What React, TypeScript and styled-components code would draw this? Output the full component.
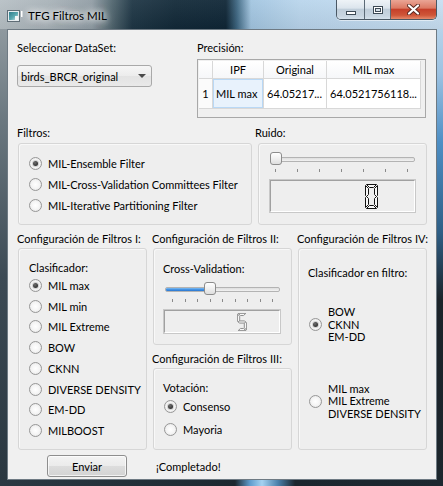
import React from "react";
import styled, { createGlobalStyle } from "styled-components";

const GlobalStyle = createGlobalStyle`
  html, body { margin: 0; padding: 0; }
  body {
    width: 443px; height: 486px; overflow: hidden;
    font-family: Lato, "Liberation Sans", Arial, sans-serif;
    font-size: 11px; color: #000;
  }
  *, *::before, *::after { box-sizing: border-box; }
`;

const Window = styled.div`
  width: 443px;
  height: 486px;
  display: flex;
  flex-direction: column;
  background: #1d2a33;
`;

const TitleBar = styled.div`
  height: 29px;
  flex: none;
  display: flex;
  align-items: flex-start;
  background:
    linear-gradient(to bottom, rgba(255,255,255,0.06), rgba(0,0,0,0.06)),
    linear-gradient(to right, #b7c0c5 0px, #a8b2b8 50px, #919da5 92px, #51666f 112px, #1e3645 132px, #122938 175px, #0f2636 226px, #3e6782 237px, #a2c5e0 251px, #b9d5ec 300px, #c8dff2 443px);
`;

const AppIconBox = styled.div`
  margin: 10px 0 0 7px;
  width: 16px;
  height: 12px;
  display: flex;
`;

const TitleText = styled.div`
  margin: 9px 0 0 5px;
  font-size: 11.5px;
  line-height: 14px;
  color: #000;
  text-shadow: 0 0 6px #fff, 0 0 8px rgba(255,255,255,0.9), 0 0 12px rgba(255,255,255,0.7);
  white-space: nowrap;
`;

const CaptionButtons = styled.div`
  margin-left: auto;
  margin-right: 6px;
  display: flex;
  height: 20px;
  border: 1px solid #4a5864;
  border-top: none;
  border-radius: 0 0 5px 5px;
  overflow: hidden;
  box-shadow: 0 1px 0 rgba(255,255,255,0.5);
`;

const CapBtn = styled.div<{ $w: number; $close?: boolean }>`
  width: ${(p) => p.$w}px;
  display: flex;
  align-items: center;
  justify-content: center;
  background: ${(p) =>
    p.$close
      ? "linear-gradient(#eaa595 0%, #dc7a64 42%, #c6402a 50%, #cf5638 80%, #e58a6c 100%)"
      : "linear-gradient(#eef3f7 0%, #dce5ed 42%, #c0ceda 50%, #c9d6e1 85%, #d6e2ec 100%)"};
  & + & { border-left: 1px solid #5b6a76; }
`;

const MinGlyph = styled.span`
  width: 10px;
  height: 4px;
  margin-top: 6px;
  background: #fff;
  border: 1px solid #3d4a55;
`;

const MaxGlyph = styled.span`
  width: 10px;
  height: 8px;
  border: 1px solid #3d4a55;
  box-shadow: inset 0 0 0 1px #fff, inset 0 0 0 2px #3d4a55;
  background: #d6e0e8;
`;

const Body = styled.div`
  flex: 1;
  display: flex;
`;

const LeftEdge = styled.div`
  width: 7px;
  background: linear-gradient(#8f999f 0%, #6b7880 20%, #3c4a54 55%, #2a3740 100%);
`;

const RightEdge = styled.div`
  width: 6px;
  background: linear-gradient(#b6d3ea 0%, #9cc2e2 10%, #4e8fc5 25%, #2f5f86 45%, #1b2329 60%, #1c262d 100%);
`;

const BottomEdge = styled.div`
  height: 6px;
  flex: none;
  background: linear-gradient(to right, #2b3943 0px, #1c2830 235px, #5f9ccd 250px, #a4d2f1 262px, #4a80ab 278px, #1b262e 295px, #1d2830 100%);
`;

const Client = styled.div`
  width: 430px;
  border: 1px solid #6e7a83;
  background: #f0f0f0;
  padding: 10px 8px 0 10px;
  display: flex;
  flex-direction: column;
`;

const Caption = styled.div<{ $dx?: number }>`
  height: 15px;
  line-height: 15px;
  white-space: nowrap;
  margin-left: ${(p) => (p.$dx ?? -1)}px;
`;

const Section = styled.div<{ $gap: number }>`
  display: flex;
  flex-direction: column;
  gap: ${(p) => p.$gap}px;
`;

const GroupBox = styled.div<{ $h: number; $pt: number; $pl: number }>`
  height: ${(p) => p.$h}px;
  border: 1px solid #d6d6d6;
  border-radius: 3px;
  background: #eeeeee;
  box-shadow: inset 1px 1px 0 #f8f8f8;
  padding: ${(p) => p.$pt}px 0 0 ${(p) => p.$pl}px;
  display: flex;
  flex-direction: column;
`;

const TopRow = styled.div`
  display: grid;
  grid-template-columns: 179px 230px;
  height: 78px;
`;

const Combo = styled.div`
  margin-top: 10px;
  margin-left: -1px;
  width: 135px;
  height: 22px;
  border: 1px solid #a9a9a9;
  border-radius: 3px;
  background: linear-gradient(#f6f6f6, #ececec 50%, #e3e3e3 51%, #e9e9e9);
  display: flex;
  align-items: center;
  justify-content: space-between;
  padding: 0 5px 0 3px;
`;

const ComboArrow = styled.span`
  width: 0;
  height: 0;
  border-left: 4px solid transparent;
  border-right: 4px solid transparent;
  border-top: 4px solid #4a4a4a;
`;

const Table = styled.div`
  margin-top: 4px;
  width: 229px;
  height: 59px;
  border: 1px solid #a8a8a8;
  padding: 1px;
  background: #f0f0f0;
`;

const TableGrid = styled.div`
  display: grid;
  grid-template-columns: 14px 51px 63px 94px;
  grid-template-rows: 18px 30px;
  width: 222px;
`;

const HeadCell = styled.div`
  background: linear-gradient(#ffffff, #f6f7f9);
  border-right: 1px solid #d8d8d8;
  border-bottom: 1px solid #d8d8d8;
  display: flex;
  align-items: center;
  justify-content: center;
  white-space: nowrap;
`;

const RowHead = styled(HeadCell)`
  background: #fbfbfb;
`;

const Cell = styled.div<{ $sel?: boolean }>`
  background: ${(p) => (p.$sel ? "#e8f2fc" : "#ffffff")};
  box-shadow: ${(p) => (p.$sel ? "inset 0 0 0 1px #b9d8f5" : "none")};
  border-right: 1px solid #d8d8d8;
  border-bottom: 1px solid #d8d8d8;
  display: flex;
  align-items: center;
  padding-left: 3px;
  white-space: nowrap;
  overflow: hidden;
`;

const Row2 = styled.div`
  margin-top: 7px;
  display: grid;
  grid-template-columns: 234px 169px;
  column-gap: 6px;
`;

const Row3 = styled.div`
  margin-top: 6px;
  display: grid;
  grid-template-columns: 129px 139px 129px;
  column-gap: 6px;
`;

const Column = styled.div`
  display: flex;
  flex-direction: column;
`;

const RadioRow = styled.div<{ $h: number }>`
  height: ${(p) => p.$h}px;
  display: flex;
  align-items: center;
  gap: 6px;
  white-space: nowrap;
`;

const RadioMark = styled.span<{ $on?: boolean }>`
  flex: none;
  width: 13px;
  height: 13px;
  border-radius: 50%;
  border: 1px solid #979797;
  background: radial-gradient(circle at 50% 50%, #ffffff 0%, #f5f5f5 50%, #dedede 100%);
  display: flex;
  align-items: center;
  justify-content: center;
  &::after {
    content: "";
    display: ${(p) => (p.$on ? "block" : "none")};
    width: 5px;
    height: 5px;
    border-radius: 50%;
    background: radial-gradient(circle at 40% 35%, #6e6e6e, #1a1a1a);
    box-shadow: 0 0 0 1px rgba(140,140,140,0.35);
  }
`;

const MultiRadio = styled.div<{ $mt: number }>`
  margin-top: ${(p) => p.$mt}px;
  display: flex;
  align-items: center;
  gap: 6px;
`;

const Lines = styled.div`
  line-height: 12.5px;
  white-space: nowrap;
`;

const SliderBox = styled.div<{ $w: number; $mt?: number }>`
  width: ${(p) => p.$w}px;
  margin-top: ${(p) => p.$mt ?? 0}px;
  display: flex;
  flex-direction: column;
  flex: none;
`;

const Track = styled.div`
  position: relative;
  height: 13px;
  padding-top: 5px;
`;

const Groove = styled.div`
  position: relative;
  height: 5px;
  border: 1px solid #b3b3b3;
  border-radius: 2px;
  background: linear-gradient(#dedede, #f2f2f2);
  overflow: hidden;
`;

const GrooveFill = styled.div`
  height: 100%;
  background: linear-gradient(#7fbdf2, #3a8ae0 60%, #2d78cf);
`;

const Handle = styled.div`
  position: absolute;
  top: 0;
  width: 12px;
  height: 13px;
  border: 1px solid #8c8c8c;
  border-radius: 3px;
  background: linear-gradient(#ffffff, #f0f0f0 50%, #dedede);
`;

const Ticks = styled.div<{ $pl: number; $pr: number }>`
  margin-top: 4px;
  height: 3px;
  display: flex;
  justify-content: space-between;
  padding: 0 ${(p) => p.$pr}px 0 ${(p) => p.$pl}px;
`;

const Tick = styled.span`
  width: 1px;
  height: 3px;
  background: #8a8a8a;
`;

const Lcd = styled.div<{ $w: number; $h: number; $pr: number; $dx?: number }>`
  margin-top: 8px;
  margin-left: ${(p) => p.$dx ?? 0}px;
  width: ${(p) => p.$w}px;
  height: ${(p) => p.$h}px;
  border: 1px solid;
  border-color: #a0a0a0 #ffffff #ffffff #a0a0a0;
  box-shadow: 0 0 0 1px #c8c8c8;
  display: flex;
  align-items: center;
  justify-content: flex-end;
  padding-right: ${(p) => p.$pr}px;
  flex: none;
`;

const BottomRow = styled.div`
  margin-top: 5px;
  display: flex;
  align-items: center;
  height: 22px;
`;

const Button = styled.button`
  margin-left: 29px;
  width: 80px;
  height: 22px;
  border: 1px solid #8e8e8e;
  border-radius: 3px;
  background: linear-gradient(#f3f3f3, #ebebeb 50%, #dddddd 51%, #d3d3d3);
  box-shadow: inset 0 0 0 1px rgba(255,255,255,0.7);
  font: inherit;
  color: #000;
  padding: 0;
`;

const Status = styled.div`
  margin-left: 29px;
  white-space: nowrap;
`;

const SEGS: Record<string, string> = {
  a: "1,0 11,0 8,3 4,3",
  b: "12,1 12,11 11,12 9,10 9,4",
  c: "12,13 12,23 9,20 9,14 11,12",
  d: "1,24 11,24 8,21 4,21",
  e: "0,13 1,12 3,14 3,20 0,23",
  f: "0,1 3,4 3,10 1,12 0,11",
  g: "1,12 3,10.5 9,10.5 11,12 9,13.5 3,13.5",
};
const DIGITS: Record<string, string> = { "0": "abcdef", "5": "afgcd" };

const SevenSeg = ({ d, w, h, color }: { d: string; w: number; h: number; color: string }) => (
  <svg width={w} height={h} viewBox="-0.5 -0.5 13 25" preserveAspectRatio="none">
    {DIGITS[d].split("").map((s) => (
      <polygon
        key={s}
        points={SEGS[s]}
        fill="#f7f7f7"
        stroke={color}
        strokeWidth={1}
        vectorEffect="non-scaling-stroke"
      />
    ))}
  </svg>
);

const Slider = ({
  w, pos, ticks, pl, pr, fill, mt,
}: { w: number; pos: number; ticks: number; pl: number; pr: number; fill?: number; mt?: number }) => (
  <SliderBox $w={w} $mt={mt}>
    <Track>
      <Groove>{fill ? <GrooveFill style={{ width: fill }} /> : null}</Groove>
      <Handle style={{ left: pos }} />
    </Track>
    <Ticks $pl={pl} $pr={pr}>
      {Array.from({ length: ticks }).map((_, i) => (
        <Tick key={i} />
      ))}
    </Ticks>
  </SliderBox>
);

const Radio = ({ label, on, h }: { label: string; on?: boolean; h: number }) => (
  <RadioRow $h={h}>
    <RadioMark $on={on} />
    <span>{label}</span>
  </RadioRow>
);

const AppIcon = () => (
  <AppIconBox>
    <svg width="16" height="12" viewBox="0 0 16 12">
      <defs>
        <linearGradient id="ig" x1="0" y1="0" x2="1" y2="1">
          <stop offset="0" stopColor="#2f7d8c" />
          <stop offset="0.55" stopColor="#5aa8b0" />
          <stop offset="1" stopColor="#d9e4e8" />
        </linearGradient>
      </defs>
      <rect x="0.5" y="0.5" width="12" height="11" fill="#e6ecef" stroke="#5f6d76" />
      <rect x="2" y="2" width="9" height="8" fill="url(#ig)" />
      <rect x="8" y="6" width="3" height="4" fill="#f4f6f7" />
      <rect x="14" y="1" width="1.5" height="6" fill="#ffffff" />
    </svg>
  </AppIconBox>
);

const CloseGlyph = () => (
  <svg width="13" height="11" viewBox="0 0 13 11">
    <path d="M2 1.5 L11 9.5 M11 1.5 L2 9.5" stroke="#5a2a22" strokeWidth="4" strokeLinecap="round" />
    <path d="M2 1.5 L11 9.5 M11 1.5 L2 9.5" stroke="#ffffff" strokeWidth="2.2" strokeLinecap="round" />
  </svg>
);

const classifiers = ["MIL max", "MIL min", "MIL Extreme", "BOW", "CKNN", "DIVERSE DENSITY", "EM-DD", "MILBOOST"];

export default function App() {
  return (
    <>
      <GlobalStyle />
      <Window>
        <TitleBar>
          <AppIcon />
          <TitleText>TFG Filtros MIL</TitleText>
          <CaptionButtons>
            <CapBtn $w={27}>
              <MinGlyph />
            </CapBtn>
            <CapBtn $w={26}>
              <MaxGlyph />
            </CapBtn>
            <CapBtn $w={46} $close>
              <CloseGlyph />
            </CapBtn>
          </CaptionButtons>
        </TitleBar>
        <Body>
          <LeftEdge />
          <Client>
            <TopRow>
              <Column>
                <Caption>Seleccionar DataSet:</Caption>
                <Combo>
                  <span>birds_BRCR_original</span>
                  <ComboArrow />
                </Combo>
              </Column>
              <Column>
                <Caption $dx={0}>Precisión:</Caption>
                <Table>
                  <TableGrid>
                    <HeadCell />
                    <HeadCell>IPF</HeadCell>
                    <HeadCell>Original</HeadCell>
                    <HeadCell>MIL max</HeadCell>
                    <RowHead>1</RowHead>
                    <Cell $sel>MIL max</Cell>
                    <Cell>64.05217...</Cell>
                    <Cell>64.0521756118...</Cell>
                  </TableGrid>
                </Table>
              </Column>
            </TopRow>

            <Row2>
              <Section $gap={3}>
                <Caption>Filtros:</Caption>
                <GroupBox $h={82} $pt={9} $pl={10}>
                  <Radio h={21} on label="MIL-Ensemble Filter" />
                  <Radio h={21} label="MIL-Cross-Validation Committees Filter" />
                  <Radio h={21} label="MIL-Iterative Partitioning Filter" />
                </GroupBox>
              </Section>
              <Section $gap={3}>
                <Caption $dx={-3}>Ruido:</Caption>
                <GroupBox $h={82} $pt={8} $pl={11}>
                  <Slider w={145} pos={0} ticks={7} pl={5} pr={7} />
                  <Lcd $w={145} $h={32} $pr={36}>
                    <SevenSeg d="0" w={13} h={25} color="#111" />
                  </Lcd>
                </GroupBox>
              </Section>
            </Row2>

            <Row3>
              <Section $gap={2}>
                <Caption>Configuración de Filtros I:</Caption>
                <GroupBox $h={202} $pt={11} $pl={10}>
                  <Caption $dx={0}>Clasificador:</Caption>
                  {classifiers.map((c, i) => (
                    <Radio key={c} h={20.75} on={i === 0} label={c} />
                  ))}
                </GroupBox>
              </Section>
              <Column>
                <Section $gap={2}>
                  <Caption>Configuración de Filtros II:</Caption>
                  <GroupBox $h={97} $pt={12} $pl={11}>
                    <Caption $dx={-2}>Cross-Validation:</Caption>
                    <Slider w={115} pos={39} ticks={9} pl={7} pr={7} fill={44} mt={6} />
                    <Lcd $w={116} $h={23} $pr={32} $dx={-1}>
                      <SevenSeg d="5" w={10} h={18} color="#8e8e8e" />
                    </Lcd>
                  </GroupBox>
                </Section>
                <Section $gap={2} style={{ marginTop: 6 }}>
                  <Caption>Configuración de Filtros III:</Caption>
                  <GroupBox $h={82} $pt={11} $pl={10}>
                    <Caption $dx={-1}>Votación:</Caption>
                    <Radio h={23} on label="Consenso" />
                    <Radio h={23} label="Mayoria" />
                  </GroupBox>
                </Section>
              </Column>
              <Section $gap={2}>
                <Caption>Configuración de Filtros IV:</Caption>
                <GroupBox $h={202} $pt={16} $pl={10}>
                  <Caption $dx={-1}>Clasificador en filtro:</Caption>
                  <MultiRadio $mt={26}>
                    <RadioMark $on />
                    <Lines>
                      BOW
                      <br />
                      CKNN
                      <br />
                      EM-DD
                    </Lines>
                  </MultiRadio>
                  <MultiRadio $mt={39}>
                    <RadioMark />
                    <Lines>
                      MIL max
                      <br />
                      MIL Extreme
                      <br />
                      DIVERSE DENSITY
                    </Lines>
                  </MultiRadio>
                </GroupBox>
              </Section>
            </Row3>

            <BottomRow>
              <Button>Enviar</Button>
              <Status>¡Completado!</Status>
            </BottomRow>
          </Client>
          <RightEdge />
        </Body>
        <BottomEdge />
      </Window>
    </>
  );
}
